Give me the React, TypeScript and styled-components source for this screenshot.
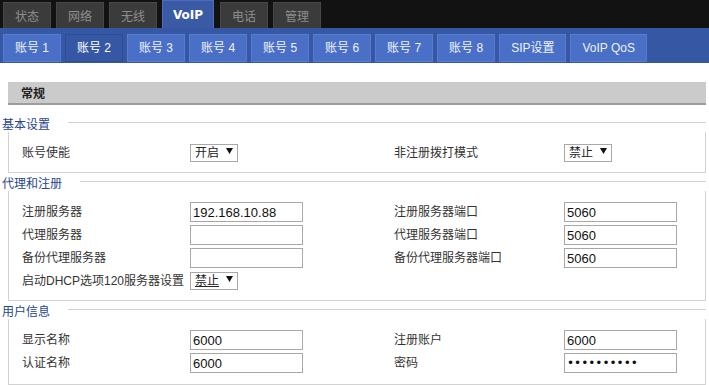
import styled, { createGlobalStyle } from "styled-components";

const GlobalStyle = createGlobalStyle`
    html, body {
        margin: 0;
        padding: 0;
        background: #fff;
    }
    body {
        font-family: "Liberation Sans", "Noto Sans CJK SC", sans-serif;
        font-size: 12px;
        color: #333;
    }
`

const TopNav = styled.nav`
    display: flex;
    align-items: flex-end;
    gap: 5px;
    height: 28px;
    padding-left: 3px;
    background-color: #121212;
`

const TopTab = styled.div<{ $active?: boolean }>`
    display: flex;
    align-items: center;
    justify-content: center;
    box-sizing: border-box;
    width: ${p => p.$active ? "52px" : "48px"};
    height: ${p => p.$active ? "28px" : "26px"};
    margin-right: ${p => p.$active ? "1px" : "0"};
    background-color: ${p => p.$active ? "#3a5aa6" : "#3b3b3b"};
    border: 1px solid ${p => p.$active ? "#4d6dba" : "#474747"};
    border-bottom: none;
    color: ${p => p.$active ? "#fff" : "#8e8e8e"};
    font-family: ${p => p.$active ? `"DejaVu Sans", sans-serif` : "inherit"};
    font-weight: ${p => p.$active ? "bold" : "normal"};
    font-size: 12px;
    line-height: 1;
    padding-top: ${p => p.$active ? "0" : "2px"};
`

const SubNav = styled.nav`
    display: flex;
    align-items: flex-end;
    gap: 4px;
    height: 35px;
    box-sizing: border-box;
    padding: 0 0 1px 3px;
    background-color: #3657a4;
`

const SubTab = styled.div<{ $active?: boolean }>`
    display: flex;
    align-items: center;
    box-sizing: border-box;
    height: 28px;
    padding: 0 11px;
    background-color: ${p => p.$active ? "#3657a4" : "#4a6fc6"};
    border: 1px solid ${p => p.$active ? "#2f4d94" : "#5a7ccc"};
    color: ${p => p.$active ? "#fff" : "#eef2fb"};
    font-size: 12px;
    line-height: 1;
    white-space: nowrap;
`

const Content = styled.main`
    padding: 19px 3px 0 2px;
`

const PanelHead = styled.div`
    margin-left: 6px;
    height: 21px;
    padding-left: 13px;
    display: flex;
    align-items: center;
    background-color: #cbcbcb;
    border-bottom: 2px solid #9c9c9c;
    font-weight: bold;
    color: #222;
`

const Group = styled.section`
    display: flex;
    flex-direction: column;
`

const GroupHead = styled.div`
    display: flex;
    align-items: center;
    height: 18px;
    span {
        color: #26468d;
        padding-right: 18px;
        line-height: 1;
        padding-top: 3px;
    }
    i {
        flex: 1;
        border-top: 1px solid #d2d2d2;
        margin-top: -1px;
    }
`

const GroupBody = styled.div<{ $bottom?: number }>`
    margin-left: 6px;
    border: 1px solid #d2d2d2;
    border-top: none;
    padding: 11px 0 ${p => p.$bottom ?? 9}px 13px;
    display: grid;
    grid-template-columns: 168px 204px 170px 1fr;
    grid-auto-rows: 20px;
    row-gap: 3px;
    align-items: center;
`

const Label = styled.div`
    color: #333;
    white-space: nowrap;
    line-height: 1;
`

const Field = styled.input`
    box-sizing: border-box;
    width: 113px;
    height: 20px;
    margin: 0;
    padding: 0 2px;
    border: 1px solid #a8a8a8;
    background: #fff;
    font-family: "Liberation Sans", sans-serif;
    font-size: 13px;
    color: #111;
    outline: none;
    &[type="password"] {
        font-family: "DejaVu Sans", sans-serif;
        font-size: 12px;
    }
`

const Select = styled.div<{ $focus?: boolean }>`
    box-sizing: border-box;
    width: 48px;
    height: 18px;
    display: flex;
    align-items: center;
    gap: 7px;
    padding-left: 4px;
    border: 1px solid #a8a8a8;
    background: #fff;
    color: #222;
    span {
        line-height: 1;
        text-decoration: ${p => p.$focus ? "underline" : "none"};
    }
    svg {
        margin-top: -4px;
    }
`

function Dropdown({ value, focus }: { value: string; focus?: boolean }) {
    return (
        <Select $focus={focus}>
            <span>{value}</span>
            <svg width="7" height="6" viewBox="0 0 7 6">
                <path d="M0 0 L7 0 L3.5 6 Z" fill="#111" />
            </svg>
        </Select>
    )
}

function GroupTitle({ title }: { title: string }) {
    return (
        <GroupHead>
            <span>{title}</span>
            <i />
        </GroupHead>
    )
}

const topTabs = ["状态", "网络", "无线", "VoIP", "电话", "管理"];
const subTabs = ["账号 1", "账号 2", "账号 3", "账号 4", "账号 5", "账号 6", "账号 7", "账号 8", "SIP设置", "VoIP QoS"];

export default function App() {
    return (
        <>
            <GlobalStyle />
            <TopNav>
                {topTabs.map(t => (
                    <TopTab key={t} $active={t === "VoIP"}>{t}</TopTab>
                ))}
            </TopNav>
            <SubNav>
                {subTabs.map(t => (
                    <SubTab key={t} $active={t === "账号 2"}>{t}</SubTab>
                ))}
            </SubNav>
            <Content>
                <PanelHead>常规</PanelHead>
                <div style={{ height: 9 }} />
                <Group>
                    <GroupTitle title="基本设置" />
                    <GroupBody>
                        <Label>账号使能</Label>
                        <Dropdown value="开启" />
                        <Label>非注册拨打模式</Label>
                        <Dropdown value="禁止" />
                    </GroupBody>
                </Group>
                <Group>
                    <GroupTitle title="代理和注册" />
                    <GroupBody>
                        <Label>注册服务器</Label>
                        <Field readOnly defaultValue="192.168.10.88" />
                        <Label>注册服务器端口</Label>
                        <Field readOnly defaultValue="5060" />
                        <Label>代理服务器</Label>
                        <Field readOnly defaultValue="" />
                        <Label>代理服务器端口</Label>
                        <Field readOnly defaultValue="5060" />
                        <Label>备份代理服务器</Label>
                        <Field readOnly defaultValue="" />
                        <Label>备份代理服务器端口</Label>
                        <Field readOnly defaultValue="5060" />
                        <Label>启动DHCP选项120服务器设置</Label>
                        <Dropdown value="禁止" focus />
                    </GroupBody>
                </Group>
                <Group>
                    <GroupTitle title="用户信息" />
                    <GroupBody $bottom={11}>
                        <Label>显示名称</Label>
                        <Field readOnly defaultValue="6000" />
                        <Label>注册账户</Label>
                        <Field readOnly defaultValue="6000" />
                        <Label>认证名称</Label>
                        <Field readOnly defaultValue="6000" />
                        <Label>密码</Label>
                        <Field readOnly type="password" defaultValue="1234567890" />
                    </GroupBody>
                </Group>
            </Content>
        </>
    )
}
